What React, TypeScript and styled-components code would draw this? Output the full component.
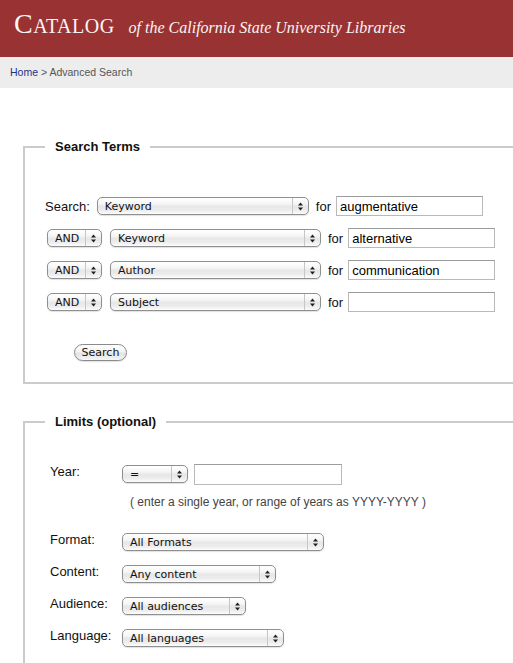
import React from 'react';
import styled, { createGlobalStyle } from 'styled-components';

const GlobalStyle = createGlobalStyle`
    html, body {
        margin: 0;
        padding: 0;
        background: #fff;
        overflow: hidden;
    }
    body {
        font-family: "Liberation Sans", Arial, sans-serif;
        color: #111;
    }
`;

const Masthead = styled.header`
    height: 57px;
    box-sizing: border-box;
    padding: 10px 0 0 14px;
    background: #993333;
    color: #fbf4f4;
    font-family: "Liberation Serif", "Times New Roman", serif;
    display: flex;
    align-items: baseline;
    white-space: nowrap;
`;

const Brand = styled.span`
    font-size: 28px;
    line-height: 28px;
    letter-spacing: 0.5px;
`;

const BrandSmall = styled.span`
    font-size: 20px;
`;

const Tagline = styled.span`
    margin-left: 14px;
    font-size: 16px;
    font-style: italic;
`;

const Crumbs = styled.nav`
    height: 31px;
    box-sizing: border-box;
    padding: 9px 0 0 10px;
    background: #ededed;
    font-size: 10.5px;
    line-height: 13px;
    color: #555;
`;

const CrumbLink = styled.a`
    color: #1a3488;
    text-decoration: none;
`;

const Content = styled.main`
    padding-top: 51px;
`;

// open on the right: the panels run past the window edge
const Fieldset = styled.fieldset<{ $padTop: number; $gapAbove?: number; $indent?: number }>`
    box-sizing: border-box;
    width: calc(100% - 23px);
    min-width: 0;
    margin: ${p => p.$gapAbove ?? 0}px 0 0 23px;
    padding: ${p => p.$padTop}px 0 21px ${p => 20 + (p.$indent ?? 0)}px;
    border: 2px solid #cbcbcb;
    border-right: none;
`;

const Legend = styled.legend<{ $shift?: number }>`
    margin-left: -${p => p.$shift ?? 0}px;
    padding: 0 10px;
    font-size: 13px;
    font-weight: bold;
    line-height: 16px;
    color: #111;
`;

const TermRows = styled.div`
    display: flex;
    flex-direction: column;
    gap: 12px;
`;

const TermRow = styled.div`
    display: flex;
    align-items: center;
    height: 20px;
`;

const RowLabel = styled.span`
    font-size: 13px;
    margin-right: 7px;
`;

const ForText = styled.span`
    font-size: 13px;
    margin: 0 5px 0 7px;
`;

const Gap = styled.span<{ $w: number }>`
    display: inline-block;
    width: ${p => p.$w}px;
    flex-shrink: 0;
`;

const PopupBox = styled.div<{ $width: number; $offset?: number }>`
    display: inline-flex;
    align-items: stretch;
    box-sizing: border-box;
    flex-shrink: 0;
    width: ${p => p.$width}px;
    height: 18px;
    margin-top: ${p => p.$offset ?? 0}px;
    border: 1px solid #8f8f8f;
    border-radius: 5px;
    background: linear-gradient(to bottom, #ffffff 0%, #f6f6f6 35%, #e6e6e6 55%, #eeeeee 80%, #fdfdfd 100%);
    box-shadow: 0 1px 1px rgba(0, 0, 0, 0.12);
    font-family: "DejaVu Sans", "Liberation Sans", sans-serif;
    font-size: 11px;
    line-height: 17px;
    color: #111;
`;

const PopupText = styled.span`
    flex: 1;
    padding-left: 7px;
    white-space: nowrap;
    overflow: hidden;
`;

const PopupArrows = styled.span`
    width: 15px;
    border-left: 1px solid #c6c6c6;
    display: flex;
    align-items: center;
    justify-content: center;
`;

const TextField = styled.input<{ $width?: number; $height?: number }>`
    box-sizing: border-box;
    flex-shrink: 0;
    width: ${p => p.$width ?? 147}px;
    height: ${p => p.$height ?? 20}px;
    margin: 0;
    padding: 0 3px;
    border: 1px solid #b9b9b9;
    border-top-color: #9c9c9c;
    border-radius: 0;
    background: #fff;
    font-family: "Liberation Sans", Arial, sans-serif;
    font-size: 13px;
    color: #000;
    outline: none;
`;

const SearchButton = styled.button`
    box-sizing: border-box;
    display: block;
    width: 53px;
    height: 17px;
    margin: 32px 0 0 29px;
    padding: 0;
    border: 1px solid #8a8a8a;
    border-radius: 9px;
    background: linear-gradient(to bottom, #ffffff 0%, #f3f3f3 45%, #e2e2e2 55%, #f5f5f5 100%);
    box-shadow: 0 1px 1px rgba(0, 0, 0, 0.12);
    font-family: "DejaVu Sans", "Liberation Sans", sans-serif;
    font-size: 11px;
    line-height: 15px;
    color: #111;
`;

const LimitRow = styled.div<{ $gapAbove?: number }>`
    display: flex;
    align-items: flex-start;
    margin-top: ${p => p.$gapAbove ?? 0}px;
`;

const LimitLabel = styled.span`
    width: 72px;
    flex-shrink: 0;
    font-size: 13px;
    line-height: 16px;
`;

const Hint = styled.div`
    margin: 10px 0 0 80px;
    font-size: 12px;
    line-height: 14px;
    color: #444;
`;

const UpDown = () => (
    <svg width="5" height="9" viewBox="0 0 5 9" aria-hidden="true">
        <path d="M0 3.6 L2.5 0.4 L5 3.6 Z M0 5.4 L2.5 8.6 L5 5.4 Z" fill="#1e1e1e" />
    </svg>
);

interface PopupProps {
    width: number;
    value: string;
    offset?: number;
}

const Popup: React.FC<PopupProps> = ({ width, value, offset }) => (
    <PopupBox $width={width} $offset={offset}>
        <PopupText>{value}</PopupText>
        <PopupArrows><UpDown /></PopupArrows>
    </PopupBox>
);

const terms = [
    { field: 'Keyword', text: 'alternative' },
    { field: 'Author', text: 'communication' },
    { field: 'Subject', text: '' },
];

const limits = [
    { label: 'Format:', value: 'All Formats', width: 202 },
    { label: 'Content:', value: 'Any content', width: 154 },
    { label: 'Audience:', value: 'All audiences', width: 124 },
    { label: 'Language:', value: 'All languages', width: 162 },
];

const App: React.FC = () => {
    return (
        <React.Fragment>
            <GlobalStyle />
            <Masthead>
                <Brand>C<BrandSmall>ATALOG</BrandSmall></Brand>
                <Tagline>of the California State University Libraries</Tagline>
            </Masthead>
            <Crumbs>
                <CrumbLink href="#">Home</CrumbLink> &gt; Advanced Search
            </Crumbs>
            <Content>
                <Fieldset $padTop={41}>
                    <Legend>Search Terms</Legend>
                    <TermRows>
                        <TermRow>
                            <RowLabel>Search:</RowLabel>
                            <Popup width={212} value="Keyword" />
                            <ForText>for</ForText>
                            <TextField readOnly value="augmentative" />
                        </TermRow>
                        {terms.map(t => (
                            <TermRow key={t.field}>
                                <Gap $w={2} />
                                <Popup width={55} value="AND" />
                                <Gap $w={8} />
                                <Popup width={211} value={t.field} />
                                <ForText>for</ForText>
                                <TextField readOnly value={t.text} />
                            </TermRow>
                        ))}
                    </TermRows>
                    <SearchButton type="button">Search</SearchButton>
                </Fieldset>

                <Fieldset $padTop={34} $gapAbove={30} $indent={5}>
                    <Legend $shift={5}>Limits (optional)</Legend>
                    <LimitRow>
                        <LimitLabel>Year:</LimitLabel>
                        <Popup width={66} value="=" offset={1} />
                        <Gap $w={6} />
                        <TextField readOnly value="" $width={148} $height={21} />
                    </LimitRow>
                    <Hint>( enter a single year, or range of years as YYYY-YYYY )</Hint>
                    {limits.map((l, i) => (
                        <LimitRow key={l.label} $gapAbove={i === 0 ? 23 : 13}>
                            <LimitLabel>{l.label}</LimitLabel>
                            <Popup width={l.width} value={l.value} offset={1} />
                        </LimitRow>
                    ))}
                </Fieldset>
            </Content>
        </React.Fragment>
    );
};

export default App;
